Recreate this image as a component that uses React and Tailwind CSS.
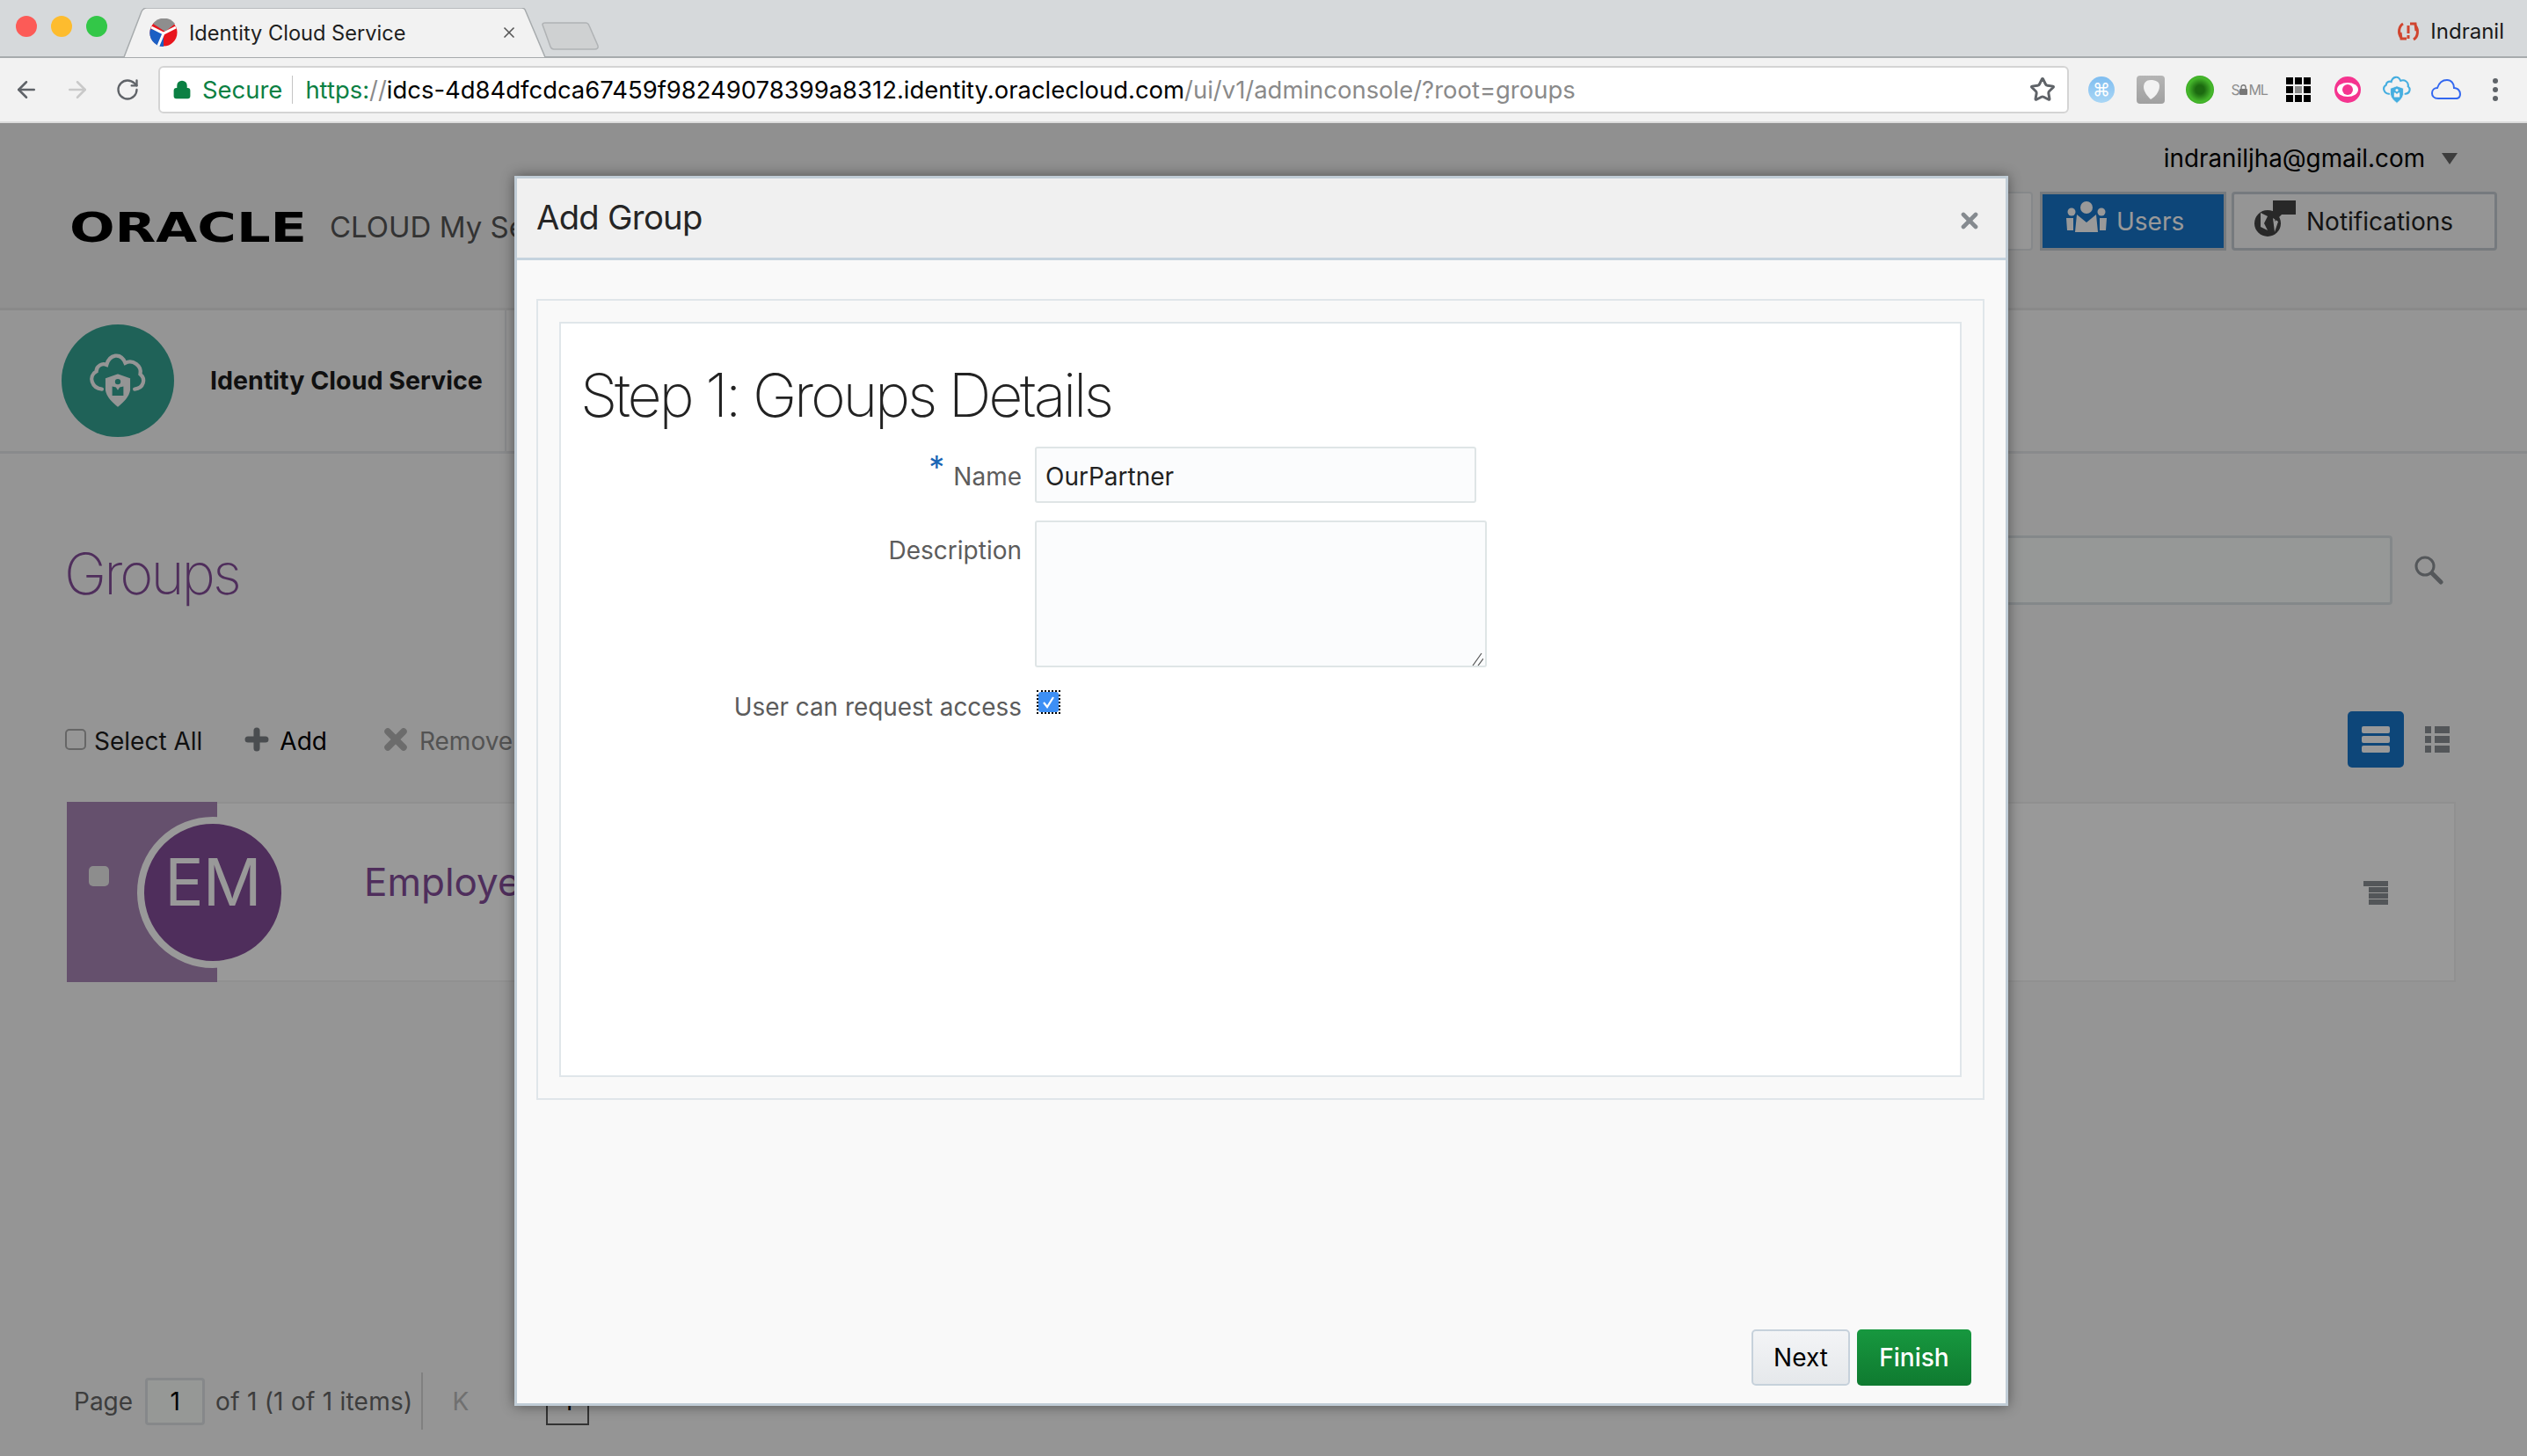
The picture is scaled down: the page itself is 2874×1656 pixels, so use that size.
import { ArrowLeft, ArrowRight, RotateCw, Star, Lock, X, Plus } from "lucide-react";

const Favicon = () => (
  <svg width="33" height="32" viewBox="0 0 33 32">
    <circle cx="16" cy="16" r="15.5" fill="#e8151d" />
    <path d="M16 16 L16 32 A15.5 15.5 0 0 1 1 12 Z" fill="#1b5fc4" />
    <path d="M4 6 A15.5 15.5 0 0 1 29 6 L18 15 Z" fill="#8e8e8e" />
    <path d="M2 10 L16 17 L30 10 M16 17 L10 31" stroke="#fff" strokeWidth="3" fill="none" />
  </svg>
);

const CloudShield = ({ color, size, fill }) => (
  <svg width={size} height={size} viewBox="0 0 64 64">
    <path d="M15 41 C4 40 0 27 9 22 C9 16 15 13 20 15 C23 4 35 1 40 13 C48 9 58 16 56 25 C62 30 60 40 50 41" fill="none" stroke={color} strokeWidth="4" strokeLinecap="round" />
    <path d="M32 24 L46 29 L46 42 C45 50 38 56 32 61 C26 56 19 50 18 42 L18 29 Z" fill={color} stroke={fill} strokeWidth="1.5" />
    <circle cx="32" cy="33" r="3" fill={fill} />
    <path d="M26 38 L30 39 L32 42 L34 39 L38 38 L38 48 L26 48 Z" fill={fill} />
  </svg>
);

const ExtSlot = ({ children }) => <div className="w-[56px] flex items-center justify-center">{children}</div>;

const BrowserChrome = () => (
  <div className="shrink-0">
    <div className="h-[66px] bg-[#d6d9db] border-b-2 border-[#a7abad] flex items-start relative">
      <div className="flex gap-[16px] pl-[18px] pt-[18px]">
        <div className="w-[24px] h-[24px] rounded-full bg-[#fc5b57]" />
        <div className="w-[24px] h-[24px] rounded-full bg-[#fdbc2e]" />
        <div className="w-[24px] h-[24px] rounded-full bg-[#33c748]" />
      </div>
      <div className="relative ml-[17px] mt-[9px] w-[483px] h-[57px] flex items-center pl-[31px]">
        <svg className="absolute inset-0" width="483" height="57" viewBox="0 0 483 57">
          <path d="M0 56 L2 56 L22 4 Q24 0 28 0 L454 0 Q458 0 459 4 L481 56 L483 56" fill="#f2f2f2" stroke="#a7abad" strokeWidth="1.5" />
        </svg>
        <div className="relative flex items-center w-full text-[23.6px] text-[#1e1e1e]">
          <Favicon />
          <span className="ml-[12px]">Identity Cloud Service</span>
          <X className="ml-auto mr-[33px] text-[#555]" size={20} strokeWidth={2} />
        </div>
      </div>
      <svg className="ml-[-6px] mt-[25px]" width="66" height="32" viewBox="0 0 66 32">
        <path d="M1 3 Q1 1 4 1 L50 1 Q53 1 54 4 L64 27 Q65 31 60 31 L14 31 Q11 31 10 28 Z" fill="#cfd1d2" stroke="#b0b3b5" strokeWidth="1.5" />
      </svg>
      <div className="ml-auto mr-[26px] mt-[18px] flex items-center gap-[12px] text-[24px] text-[#1a1a1a]">
        <svg width="26" height="24" viewBox="0 0 26 24" fill="none" stroke="#d0452f" strokeWidth="3">
          <path d="M7 3 C2 6 1 14 5 19 M4 13 L5 20 L11 20" />
          <path d="M19 21 C24 18 25 10 21 5 M22 11 L21 3 L15 3" />
          <path d="M13 5 V14 M13 16 V20" />
        </svg>
        <span>Indranil</span>
      </div>
    </div>
    <div className="h-[74px] bg-[#f2f2f2] border-b-2 border-[#dcdcdc] flex items-center">
      <div className="flex items-center gap-[28px] pl-[15px] w-[180px]">
        <ArrowLeft size={30} strokeWidth={2} className="text-[#5f6368]" />
        <ArrowRight size={30} strokeWidth={2} className="text-[#c9c9c9]" />
        <RotateCw size={28} strokeWidth={2} className="text-[#5f6368]" />
      </div>
      <div className="w-[2173px] h-[54px] bg-white border-2 border-[#d4d4d4] rounded-[6px] flex items-center pl-[14px] text-[27.45px]">
        <Lock size={22} fill="#0b8043" strokeWidth={2.5} className="text-[#0b8043]" />
        <span className="ml-[12px] pt-[2px] text-[#0b8043]">Secure</span>
        <div className="w-px h-[32px] bg-[#c4c4c4] ml-[11px] mr-[14px]" />
        <span className="pt-[2px]">
          <span className="text-[#0b8043]">https:</span>
          <span className="text-[#8a8a8a]">//</span>
          <span className="text-black">idcs-4d84dfcdca67459f98249078399a8312.identity.oraclecloud.com</span>
          <span className="text-[#8a8a8a]">/ui/v1/adminconsole/?root=groups</span>
        </span>
        <Star size={30} strokeWidth={2.4} className="ml-auto mr-[13px] text-[#5f6368]" />
      </div>
      <div className="flex items-center ml-[9px]">
        <ExtSlot>
          <div className="w-[30px] h-[30px] rounded-full bg-gradient-to-b from-[#7fbdf0] to-[#a9d6f5] text-white text-[20px] flex items-center justify-center">⌘</div>
        </ExtSlot>
        <ExtSlot>
          <div className="w-[32px] h-[32px] rounded-[4px] bg-gradient-to-b from-[#b5b5b5] to-[#a0a0a0] flex items-center justify-center">
            <svg width="22" height="24" viewBox="0 0 22 24"><path d="M11 1 C17 1 21 3 21 8 C21 15 15 21 11 23 C7 19 3 14 3 9 C3 4 6 1 11 1 Z" fill="#f2f2f2" /></svg>
          </div>
        </ExtSlot>
        <ExtSlot>
          <div className="w-[32px] h-[32px] rounded-full bg-[radial-gradient(circle,#1c6a10_22%,#46b82c_60%,#2a8f18_100%)]" />
        </ExtSlot>
        <ExtSlot>
          <div className="flex items-center text-[16px] text-[#8d8d8d] tracking-[-1.2px] leading-none">
            S
            <svg width="9" height="12" viewBox="0 0 9 12" className="mx-[1px]"><path d="M2 5 V3 C2 0 7 0 7 3 V5" fill="none" stroke="#777" strokeWidth="1.4" /><rect x="0" y="5" width="9" height="7" rx="1" fill="#777" /></svg>
            ML
          </div>
        </ExtSlot>
        <ExtSlot>
          <div className="grid grid-cols-3 gap-[2px]">
            {[0, 1, 2, 3, 4, 5, 6, 7, 8].map((i) => (
              <div key={i} className={i === 4 ? "w-[8px] h-[8px] bg-[#8a8a8a]" : "w-[8px] h-[8px] bg-black"} />
            ))}
          </div>
        </ExtSlot>
        <ExtSlot>
          <div className="w-[30px] h-[30px] rounded-full bg-[#f5348f] flex items-center justify-center">
            <div className="w-[24px] h-[16px] rounded-[50%] bg-white flex items-center justify-center">
              <div className="w-[12px] h-[12px] rounded-full bg-[#f5348f]" />
            </div>
          </div>
        </ExtSlot>
        <ExtSlot>
          <CloudShield color="#45aee0" size={34} fill="#f2f2f2" />
        </ExtSlot>
        <ExtSlot>
          <svg width="34" height="24" viewBox="0 0 34 24" fill="none" stroke="#3368f0" strokeWidth="2">
            <path d="M8 22 C3 22 1 19 1 16 C1 12 4 10 7 10 C9 4 13 1 18 1 C23 1 26 5 26 10 C30 10 33 13 33 17 C33 20 31 22 28 22 Z" />
          </svg>
        </ExtSlot>
        <ExtSlot>
          <div className="flex flex-col gap-[4px]">
            <div className="w-[6px] h-[6px] rounded-full bg-[#5f6368]" />
            <div className="w-[6px] h-[6px] rounded-full bg-[#5f6368]" />
            <div className="w-[6px] h-[6px] rounded-full bg-[#5f6368]" />
          </div>
        </ExtSlot>
      </div>
    </div>
  </div>
);

const PageHeader = () => (
  <div className="h-[213px] bg-[#f0f0f0] border-b-[3px] border-[#e4e4e4] flex justify-between">
    <div className="flex items-center pl-[79px] pt-[28px]">
      <span className="w-[255px] origin-left scale-x-[1.32] text-[46px] leading-none font-bold text-black font-['DejaVu_Sans',sans-serif]">ORACLE</span>
      <span className="text-[33px] text-[#555] ml-[41px]">CLOUD My Services</span>
    </div>
    <div className="flex flex-col items-end pr-[34px] pt-[23px]">
      <div className="flex items-center text-[27.8px] leading-[34px] text-black">
        indraniljha@gmail.com
        <div className="ml-[19px] mr-[45px] w-0 h-0 border-l-[9px] border-r-[9px] border-t-[13px] border-l-transparent border-r-transparent border-t-[#666]" />
      </div>
      <div className="flex mt-[21px] h-[67px]">
        <div className="w-[300px] border-2 border-[#dfe3e6] bg-[#fafafa] rounded-[4px]" />
        <div className="ml-[8px] w-[212px] bg-[#1675ca] border-[3px] border-[#c5cbd2] flex items-center pl-[27px] text-[28px] text-white">
          <svg width="46" height="36" viewBox="0 0 46 36" fill="#fff" className="mb-[10px]">
            <circle cx="23" cy="7" r="7" />
            <circle cx="6" cy="12" r="4.5" />
            <circle cx="40" cy="12" r="4.5" />
            <path d="M12 15 L23 24 L34 15 L36 35 L10 35 Z" />
            <path d="M0 19 L8 19 L8 33 L1 33 Z M38 19 L46 19 L45 33 L38 33 Z" />
          </svg>
          <span className="ml-[11px]">Users</span>
        </div>
        <div className="ml-[6px] w-[302px] bg-[#f8f8f8] border-[3px] border-[#c5cbd2] rounded-[4px] flex items-center pl-[22px] text-[28px] text-[#222]">
          <svg width="48" height="42" viewBox="0 0 48 42" className="mb-[6px]">
            <circle cx="16" cy="26" r="15" fill="#444" />
            <path d="M8 14 L16 18 L12 26 L16 34 L8 30 Z M22 20 L28 24 L24 36 Z" fill="#f8f8f8" />
            <path d="M22 0 L48 0 L48 16 L32 16 L24 24 L26 16 L22 16 Z" fill="#444" />
          </svg>
          <span className="ml-[12px]">Notifications</span>
        </div>
      </div>
    </div>
  </div>
);

const NavStrip = () => (
  <div className="h-[163px] bg-[#f8f8f8] border-b-[3px] border-[#e4e7ea] flex">
    <div className="w-[576px] border-r-2 border-[#e4e7ea] flex items-center pl-[70px]">
      <div className="w-[128px] h-[128px] rounded-full bg-[#34a393] flex items-center justify-center">
        <CloudShield color="#f8f8f8" size={68} fill="#34a393" />
      </div>
      <span className="ml-[41px] text-[28.6px] font-bold text-[#1c1c1c]">Identity Cloud Service</span>
    </div>
  </div>
);

const Content = () => (
  <div className="flex-1 bg-[#f8f8f8] flex flex-col">
    <div className="mt-[93px] h-[79px] flex items-center pl-[73px] pr-[95px]">
      <h1 className="text-[65px] pt-[7px] font-extralight leading-none text-[#844e99] tracking-[-3px]">Groups</h1>
      <div className="ml-auto w-[1300px] h-full bg-[#fbfefc] border-[3px] border-[#dde3e6] rounded-[4px]" />
      <svg width="33" height="33" viewBox="0 0 33 33" className="ml-[25px]" fill="none" stroke="#8c9196">
        <circle cx="12" cy="12" r="10" strokeWidth="3" />
        <path d="M20 20 L30 30" strokeWidth="5" strokeLinecap="round" />
      </svg>
    </div>
    <div className="mt-[121px] h-[64px] flex items-center pl-[74px] pr-[88px] text-[28px]">
      <div className="w-[24px] h-[24px] bg-[#fbfbfb] border-2 border-[#aaa] rounded-[5px]" />
      <span className="ml-[9px] pt-[4px] text-[#1c1c1c]">Select All</span>
      <Plus size={34} strokeWidth={5} className="ml-[45px] text-[#7c8085]" />
      <span className="ml-[9px] pt-[4px] text-black">Add</span>
      <X size={36} strokeWidth={5} className="ml-[60px] text-[#b4b4b4]" />
      <span className="ml-[9px] pt-[4px] text-[#8a8a8a]">Remove</span>
      <div className="ml-auto w-[64px] h-[64px] rounded-[5px] bg-[#1675ca] flex flex-col items-center justify-center gap-[3px]">
        <div className="w-[32px] h-[8px] rounded-[2px] bg-white" />
        <div className="w-[32px] h-[8px] rounded-[2px] bg-white" />
        <div className="w-[32px] h-[8px] rounded-[2px] bg-white" />
      </div>
      <div className="ml-[24px] grid grid-cols-[7px_17px] gap-x-[4px] gap-y-[3px]">
        {[0, 1, 2].map((i) => [
          <div key={"a" + i} className="h-[8px] bg-[#8a8f94]" />,
          <div key={"b" + i} className="h-[8px] bg-[#8a8f94]" />,
        ])}
      </div>
    </div>
    <div className="mt-[39px] ml-[76px] mr-[81px] h-[205px] bg-white border-2 border-[#f0f0f0] flex items-start relative">
      <div className="w-[171px] h-[205px] bg-[#a885b6] -mt-[2px] -ml-[2px] shrink-0 pl-[25px] pt-[73px]">
        <div className="w-[23px] h-[23px] rounded-[5px] bg-[#ececec]" />
      </div>
      <div className="absolute left-[78px] top-[15px] w-[172px] h-[172px] rounded-full bg-[#844e99] border-[8px] border-white flex justify-center pt-[21px] text-[74px] leading-[90px] tracking-[-1px] text-white">EM</div>
      <span className="ml-[167px] mt-[59px] text-[44px] leading-[60px] text-[#844e99]">Employee</span>
      <div className="absolute right-[75px] top-[88px] flex flex-col items-end gap-[1px]">
        <div className="w-[28px] h-[6px] bg-[#8a8f94]" />
        <div className="w-[22px] h-[6px] bg-[#8a8f94]" />
        <div className="w-[22px] h-[6px] bg-[#8a8f94]" />
        <div className="w-[22px] h-[6px] bg-[#8a8f94]" />
      </div>
    </div>
    <div className="mt-[444px] h-[65px] flex items-center pl-[84px] text-[28px] text-[#666]">
      <span>Page</span>
      <div className="ml-[14px] w-[68px] h-[54px] border-[3px] border-[#dfe3e6] bg-[#fafdfa] rounded-[4px] flex items-center justify-center text-black">1</div>
      <span className="ml-[12px] tracking-[0.25px]">of 1 (1 of 1 items)</span>
      <div className="ml-[10px] w-[2px] h-[65px] bg-[#d6d6d6]" />
      <span className="ml-[33px] text-[#bbb]">K</span>
      <div className="ml-[88px] w-[49px] h-[54px] border-2 border-[#555] flex items-center justify-center text-black">1</div>
    </div>
  </div>
);

const AddGroupModal = () => (
  <div className="absolute left-[585px] top-[60px] w-[1699px] h-[1399px] bg-[#f9f9f9] border-[3px] border-[#c0ccd6] shadow-[0_0_14px_rgba(0,0,0,0.45)] flex flex-col">
    <div className="h-[93px] shrink-0 bg-[#f0f0f0] border-b-[3px] border-[#c5d3de] flex items-center justify-between pl-[22px] pr-[27px]">
      <h2 className="text-[38.2px] text-[#252525] tracking-[-0.7px]">Add Group</h2>
      <X size={28} strokeWidth={4} className="text-[#858a8f] mt-[6px]" />
    </div>
    <div className="mt-[44px] ml-[22px] mr-[24px] h-[911px] border-2 border-[#e0e6ea] p-[24px]">
      <div className="h-full bg-white border-2 border-[#e0e6ea] pt-[47px]">
        <h3 className="pl-[22px] text-[68px] leading-[68px] font-extralight text-[#222] tracking-[-3.3px]">Step 1: Groups Details</h3>
        <div className="mt-[25px] flex items-center h-[64px]">
          <label className="w-[524px] text-right text-[28px] text-[#5c5c5c] pb-[5px]">
            <span className="text-[#1a66b5] text-[36px] leading-none align-[8px] mr-[10px]">*</span>Name
          </label>
          <input
            readOnly
            value="OurPartner"
            className="ml-[15px] w-[502px] h-[64px] bg-[#fbfcfd] border-2 border-[#dfe5e6] rounded-[3px] px-[10px] pt-[4px] text-[28px] text-[#222] outline-none"
          />
        </div>
        <div className="mt-[20px] flex items-start">
          <label className="w-[524px] text-right text-[28px] text-[#5c5c5c] pt-[13px]">Description</label>
          <div className="relative ml-[15px] w-[514px] h-[167px]">
            <textarea className="w-full h-full block resize-none bg-[#fbfcfd] border-2 border-[#dfe5e6] rounded-[3px] outline-none" />
            <svg className="absolute right-[4px] bottom-[2px]" width="13" height="15" viewBox="0 0 13 15" fill="none" stroke="#555" strokeWidth="1.2">
              <path d="M1 15 L11 1 M7 15 L13 7" />
            </svg>
          </div>
        </div>
        <div className="mt-[26px] flex items-start">
          <label className="w-[524px] -mt-[1px] text-right text-[27.9px] text-[#5c5c5c]">User can request access</label>
          <div className="ml-[17px] w-[27px] h-[27px] outline-2 outline-dotted outline-black -outline-offset-2 p-[2px]">
            <div className="w-full h-full bg-[#3d8ff5] rounded-[3px] flex items-center justify-center">
              <svg width="15" height="15" viewBox="0 0 15 15" fill="none" stroke="#fff" strokeWidth="2.2"><path d="M2 8 L6 13 L13 2" /></svg>
            </div>
          </div>
        </div>
      </div>
    </div>
    <div className="mt-auto mb-[20px] flex justify-end gap-[8px] pr-[39px]">
      <button className="w-[112px] h-[64px] bg-gradient-to-b from-[#f3f4f6] to-[#e5e8eb] border-2 border-[#c6d1db] rounded-[5px] text-[28px] text-black">Next</button>
      <button className="w-[130px] h-[64px] bg-gradient-to-b from-[#17983f] to-[#0f7a30] rounded-[5px] text-[28px] font-medium text-white">Finish</button>
    </div>
  </div>
);

export default function App() {
  return (
    <div className="w-[2874px] h-[1656px] flex flex-col overflow-hidden font-['Inter',sans-serif]">
      <BrowserChrome />
      <div className="relative flex-1 flex flex-col overflow-hidden">
        <PageHeader />
        <NavStrip />
        <Content />
        <div className="absolute inset-0 bg-black/40" />
        <AddGroupModal />
      </div>
    </div>
  );
}
